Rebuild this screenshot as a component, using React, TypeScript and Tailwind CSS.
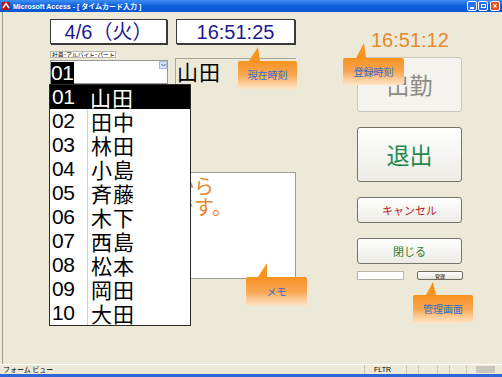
import React from "react";

const jp = "font-['Noto_Sans_CJK_JP',sans-serif]";
const sans = "font-['Liberation_Sans','Noto_Sans_CJK_JP',sans-serif]";

const staff = [
  ["01", "山田"],
  ["02", "田中"],
  ["03", "林田"],
  ["04", "小島"],
  ["05", "斉藤"],
  ["06", "木下"],
  ["07", "西島"],
  ["08", "松本"],
  ["09", "岡田"],
  ["10", "大田"],
];

type CalloutProps = {
  label: string;
  x: number;
  y: number;
  w: number;
  h: number;
  tail: [number, number, number, number, number, number];
};

// balloon tip over the form, coordinates are page pixels
function Callout({ label, x, y, w, h, tail }: CalloutProps) {
  const top = y - 12;
  const minY = Math.min(tail[1], tail[3], tail[5]);
  return (
    <>
      <svg
        className="absolute"
        style={{ left: 0, top: minY - 12, width: 502, height: y - minY + 1 }}
        viewBox={`0 ${minY} 502 ${y - minY + 1}`}
      >
        <polygon points={tail.join(",")} fill="#f7931e" />
      </svg>
      <div
        className={`absolute flex items-center justify-center rounded-[2px] bg-gradient-to-b from-[#f7921c] via-[#f9a650] to-[#fee5c6] text-[10px] leading-none text-[#2f6dcf] ${jp}`}
        style={{ left: x, top, width: w, height: h }}
      >
        {label}
      </div>
    </>
  );
}

function TitleBar() {
  return (
    <div className="flex h-[12px] items-center bg-gradient-to-b from-[#3d8ff6] via-[#0c5fda] to-[#0a55d0] pl-[2px]">
      <svg width="8" height="8" viewBox="0 0 8 8">
        <rect x="0" y="0" width="8" height="8" fill="#b01818" />
        <path d="M1 6 L4 1.5 L7 6" stroke="#fff" strokeWidth="1.4" fill="none" />
      </svg>
      <span className={`ml-[3px] text-[7px] font-bold leading-none text-white ${sans}`}>
        Microsoft Access - [ タイムカード入力 ]
      </span>
      <div className="ml-auto mr-[2px] flex gap-[1px]">
        <div className="flex h-[10px] w-[10px] items-end justify-center rounded-[2px] border border-white bg-[#2a6ff0] pb-[1px]">
          <div className="h-[2px] w-[4px] bg-white" />
        </div>
        <div className="flex h-[10px] w-[10px] items-center justify-center rounded-[2px] border border-white bg-[#2a6ff0]">
          <div className="h-[4px] w-[5px] border border-white" />
        </div>
        <div className="ml-[1px] flex h-[10px] w-[10px] items-center justify-center rounded-[2px] border border-white bg-[#e0502c] text-[8px] font-bold leading-none text-white">
          ×
        </div>
      </div>
    </div>
  );
}

function StatusBar() {
  return (
    <div className={`flex h-[10px] border-t border-white bg-[#ece9d8] text-[7px] leading-[9px] text-black ${jp}`}>
      <div className="flex-1 pl-[3px]">フォーム ビュー</div>
      <div className={`w-[42px] border-l border-[#c9c6b5] pl-[9px] ${sans}`}>FLTR</div>
      <div className="w-[12px] border-l border-[#c9c6b5]" />
      <div className="w-[19px] border-l border-[#c9c6b5]" />
      <div className="w-[12px] border-l border-[#c9c6b5]" />
      <div className="w-[17px] border-l border-[#c9c6b5]" />
      <div className="w-[10px] border-l border-[#c9c6b5]" />
      <div className="my-[1px] w-[19px] bg-[#c9c7bd]" />
      <div className="w-[7px]" />
    </div>
  );
}

function BigButton({ label, disabled }: { label: string; disabled?: boolean }) {
  return (
    <div
      className={
        disabled
          ? `flex h-[55px] w-[105px] items-center justify-center rounded-[3px] border border-[#cac8bb] bg-[#f4f3ee] text-[23px] text-[#8e8c84] ${jp}`
          : `flex h-[55px] w-[105px] items-center justify-center rounded-[3px] border border-[#77756a] bg-gradient-to-b from-white to-[#ecebe4] text-[23px] text-[#1f8a50] ${jp}`
      }
    >
      {label}
    </div>
  );
}

function SmallButton({ label, color }: { label: string; color: string }) {
  return (
    <div
      className={`flex h-[26px] w-[105px] items-center justify-center rounded-[3px] border border-[#77756a] bg-gradient-to-b from-white to-[#ecebe4] text-[11px] ${color} ${jp}`}
    >
      {label}
    </div>
  );
}

export default function App() {
  return (
    <div className="flex h-[377px] w-[502px] flex-col overflow-hidden bg-[#ece9d8]">
      <TitleBar />

      <div className="relative flex-1 pl-[2px]">
        <div className="flex h-full border-l border-[#9d9b8e] pl-[47px]">
          {/* left column */}
          <div className="w-[246px] pt-[7px]">
            <div className="flex gap-[9px]">
              <div className={`flex h-[25px] w-[117px] items-center justify-center border border-[#3a3a3a] bg-white text-[20px] text-[#1b1b8f] shadow-[1px_1px_0_#3a3a3a] ${sans}`}>
                4/6（火）
              </div>
              <div className={`flex h-[25px] w-[119px] items-center justify-center border border-[#3a3a3a] bg-white text-[20px] text-[#1b1b8f] shadow-[1px_1px_0_#3a3a3a] ${sans}`}>
                16:51:25
              </div>
            </div>

            <div className={`mt-[7px] flex h-[7px] w-[66px] items-center overflow-hidden whitespace-nowrap border border-[#b9b7aa] bg-white pl-[1px] text-[6px] leading-none tracking-[-0.3px] text-black ${jp}`}>
              社員･アルバイト･パート
            </div>

            <div className="flex items-start">
              <div className="relative mt-[2px] h-[24px] w-[118px] border border-[#9a9a9a] bg-white">
                <div className={`mt-[1px] h-[22px] w-[23px] bg-black text-[21px] leading-[22px] tracking-[-0.5px] text-white ${sans}`}>
                  01
                </div>
                <div className="absolute right-0 top-0 flex h-[8px] w-[8px] items-center justify-center border border-[#a9bce0] bg-[#d6e2f8]">
                  <svg width="5" height="4" viewBox="0 0 5 4">
                    <path d="M0.5 1 L2.5 3 L4.5 1" stroke="#4d6185" strokeWidth="1" fill="none" />
                  </svg>
                </div>

                {/* open drop-down list */}
                <div className="absolute left-[-2px] top-[23px] z-10 w-[142px] border border-[#2b2b2b] bg-white">
                  {staff.map(([code, name], i) => (
                    <div
                      key={code}
                      className={i === 0 ? "flex h-[24px] bg-black text-white" : "flex h-[24px] text-black"}
                    >
                      <div className={`w-[37px] pl-[2px] text-[21px] leading-[24px] tracking-[-0.5px] ${sans}`}>
                        {code}
                      </div>
                      <div
                        className={
                          i === 0
                            ? `flex-1 pl-[3px] text-[21px] leading-[24px] tracking-[1px] ${jp}`
                            : `flex-1 border-l border-[#d4d4d4] pl-[3px] text-[21px] leading-[24px] tracking-[1px] ${jp}`
                        }
                      >
                        {name}
                      </div>
                    </div>
                  ))}
                </div>
              </div>

              <div className={`ml-[7px] flex h-[27px] w-[121px] items-center border-l border-t border-[#a9a79b] pl-[1px] text-[21px] tracking-[1px] text-black ${jp}`}>
                山田
              </div>
            </div>

            <div className={`ml-[119px] mt-[87px] h-[107px] w-[127px] border border-[#9c9c9c] bg-white pl-[4px] pt-[2px] text-[20px] leading-[21px] text-[#e8862a] ${jp}`}>
              <div>から</div>
              <div>です。</div>
            </div>
          </div>

          {/* right column */}
          <div className="ml-[61px] w-[106px]">
            <div className={`mt-[16px] pl-[14px] text-[20px] leading-[24px] text-[#e6892e] ${sans}`}>16:51:12</div>
            <div className="mt-[5px]">
              <BigButton label="出勤" disabled />
            </div>
            <div className="mt-[15px]">
              <BigButton label="退出" />
            </div>
            <div className="mt-[15px]">
              <SmallButton label="キャンセル" color="text-[#b3201f]" />
            </div>
            <div className="mt-[15px]">
              <SmallButton label="閉じる" color="text-[#2a7d2a]" />
            </div>
            <div className="mt-[7px] flex">
              <div className="h-[9px] w-[47px] border border-[#b8b6aa] bg-white" />
              <div className={`ml-[13px] flex h-[9px] w-[46px] items-center justify-center rounded-[2px] border border-[#6f6d62] bg-gradient-to-b from-white to-[#e6e4dc] text-[5px] leading-none text-black ${jp}`}>
                管理
              </div>
            </div>
          </div>
        </div>

        <Callout label="現在時刻" x={238} y={61} w={59} h={28} tail={[249, 61, 258, 47, 260, 61]} />
        <Callout label="登録時刻" x={343} y={58} w={61} h={27} tail={[356, 58, 364, 43, 366, 58]} />
        <Callout label="メモ" x={246} y={277} w={61} h={29} tail={[258, 277, 267, 263, 267, 277]} />
        <Callout label="管理画面" x={413} y={295} w={60} h={28} tail={[426, 295, 433, 282, 436, 295]} />
      </div>

      <StatusBar />
      <div className="h-[3px] bg-[#2f66d6]" />
    </div>
  );
}
